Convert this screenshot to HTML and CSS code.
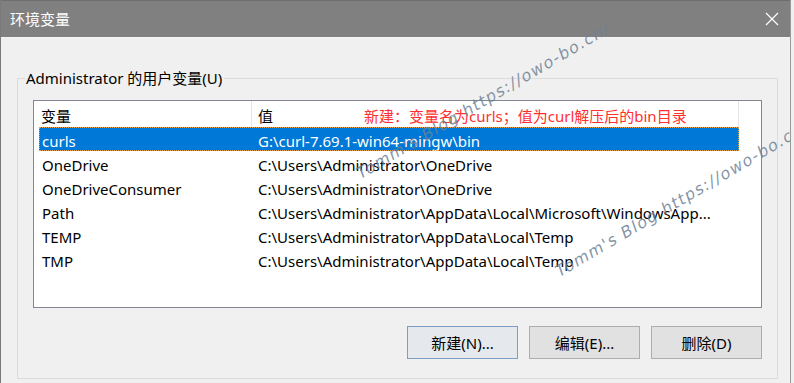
FILE: index.html
```html
<!DOCTYPE html>
<html lang="zh-CN">
<head>
<meta charset="utf-8">
<title>环境变量</title>
<link rel="stylesheet" href="styles.css">
</head>
<body>
<div class="window">
  <div class="titlebar">
    <span class="title">环境变量</span>
    <span class="close">
      <svg width="14" height="14" viewBox="0 0 14 14"><path d="M1 1 L13 13 M13 1 L1 13" stroke="#fff" stroke-width="1.2" fill="none"/></svg>
    </span>
  </div>
  <div class="content">
    <fieldset class="group">
      <legend class="legend">Administrator 的用户变量(U)</legend>
      <div class="listbox">
        <div class="header">
          <div class="hcell hcell-name">变量</div>
          <div class="hcell hcell-value">值<span class="note">新建：变量名为curls；值为curl解压后的bin目录</span></div>
        </div>
        <div class="rows">
          <div class="row selected"><div class="cell">curls</div><div class="cell">G:\curl-7.69.1-win64-mingw\bin</div></div>
          <div class="row"><div class="cell">OneDrive</div><div class="cell">C:\Users\Administrator\OneDrive</div></div>
          <div class="row"><div class="cell">OneDriveConsumer</div><div class="cell">C:\Users\Administrator\OneDrive</div></div>
          <div class="row"><div class="cell">Path</div><div class="cell">C:\Users\Administrator\AppData\Local\Microsoft\WindowsApp...</div></div>
          <div class="row"><div class="cell">TEMP</div><div class="cell">C:\Users\Administrator\AppData\Local\Temp</div></div>
          <div class="row"><div class="cell">TMP</div><div class="cell">C:\Users\Administrator\AppData\Local\Temp</div></div>
        </div>
      </div>
      <div class="buttons">
        <button class="btn btn-default">新建(N)...</button>
        <button class="btn">编辑(E)...</button>
        <button class="btn">删除(D)</button>
      </div>
    </fieldset>
  </div>
  <div class="watermark wm1">Tomm's Blog https://owo-bo.cn/</div>
  <div class="watermark wm2">Tomm's Blog https://owo-bo.cn/</div>
</div>
</body>
</html>
```
FILE: styles.css
```css
* { box-sizing: border-box; }
html, body { margin: 0; padding: 0; }
body {
  width: 794px;
  height: 383px;
  overflow: hidden;
  background: #f0f0f0;
  font-family: "Noto Sans", "Noto Sans CJK SC", sans-serif;
  font-size: 15px;
  color: #000;
}
.window {
  position: relative;
  width: 791px;
  height: 383px;
  background: #f0f0f0;
  border-left: 1px solid #7a7a7a;
  border-right: 1px solid #9a9a9a;
  overflow: hidden;
}
.titlebar {
  height: 38px;
  background: #808080;
  border-top: 1px solid #6e6e6e;
  border-bottom: 1px solid #f4f4f4;
  display: flex;
  align-items: center;
  justify-content: space-between;
  padding-left: 9px;
  padding-right: 11px;
}
.title {
  color: #fff;
  font-family: "Noto Sans CJK SC", sans-serif;
  font-size: 15px;
  line-height: 20px;
}
.close { display: flex; width: 14px; height: 14px; }
.content {
  padding: 30px 12px 0 16px;
}
.group {
  margin: 0;
  padding: 0 15px 0 15px;
  height: 311px;
  border: 1px solid #dcdcdc;
  min-width: 0;
}
.legend {
  margin-left: -8px;
  padding: 0 2px 0 1px;
  font-size: 15px;
  line-height: 20px;
}
.listbox {
  margin-top: 12px;
  height: 208px;
  border: 1px solid #828790;
  background: #fff;
}
.header {
  display: flex;
  height: 26px;
}
.hcell {
  display: flex;
  align-items: center;
  padding-left: 7px;
  padding-top: 2px;
  border-right: 1px solid #e5e5e5;
  white-space: nowrap;
}
.hcell-name { width: 218px; }
.hcell-value { width: 487px; padding-left: 6px; }
.note {
  color: #ff3030;
  margin-left: 91px;
}
.rows { padding-left: 5px; }
.row {
  display: grid;
  grid-template-columns: 216px 1fr;
  width: 700px;
  height: 24px;
  align-items: center;
}
.cell {
  padding-left: 3px;
  padding-top: 4px;
  white-space: nowrap;
  line-height: 20px;
}
.row.selected {
  background: #0078d7;
  color: #fff;
  outline: 1px dotted #e8a04a;
  outline-offset: -1px;
}
.buttons {
  display: flex;
  justify-content: flex-end;
  gap: 11px;
  margin-top: 18px;
}
.btn {
  width: 111px;
  height: 33px;
  background: #e1e1e1;
  border: 1px solid #adadad;
  font-family: "Noto Sans", "Noto Sans CJK SC", sans-serif;
  font-size: 15px;
  color: #000;
  padding: 0;
}
.btn-default {
  background: #e5e9ee;
  border-color: #7b9ec4;
}
.watermark {
  position: absolute;
  font-family: "DejaVu Sans", sans-serif;
  font-style: italic;
  font-weight: 200;
  font-size: 16px;
  letter-spacing: 1.3px;
  color: rgba(110, 128, 148, 0.85);
  white-space: nowrap;
  transform-origin: 0 50%;
  transform: rotate(-30.5deg);
  line-height: 20px;
}
.wm1 { left: 357px; top: 165px; }
.wm2 { left: 556px; top: 263px; }
```
